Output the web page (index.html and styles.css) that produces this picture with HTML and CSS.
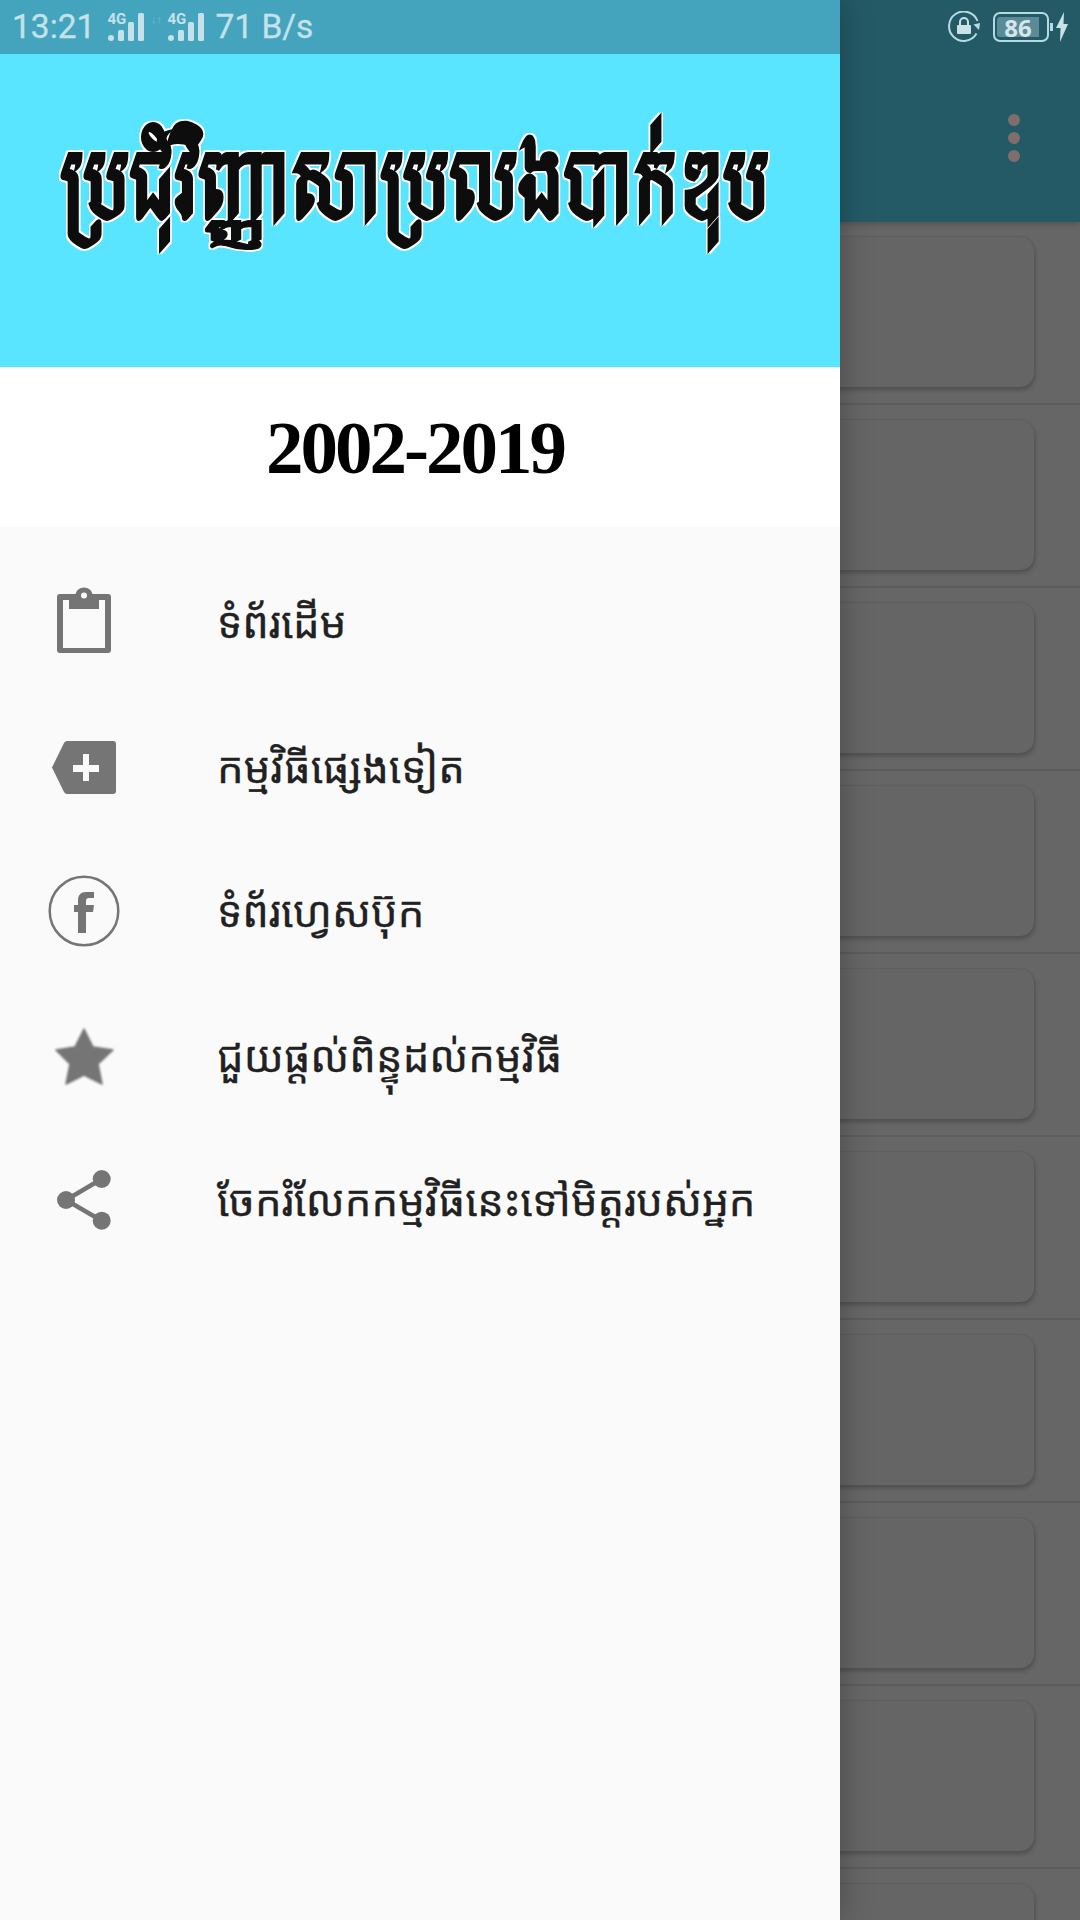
FILE: index.html
```html
<!DOCTYPE html>
<html lang="km">
<head>
<meta charset="utf-8">
<title>ប្រជុំវិញ្ញាសាប្រលងបាក់ឌុប</title>
<link rel="stylesheet" href="styles.css">
</head>
<body>
<div class="screen">
  <div class="main">
    <div class="topbar">
      <div class="sys-right">
        <svg class="i-lock" viewBox="0 0 32 32" width="32" height="32"><path d="M28.500 22.500A14.700 14.700 0 1 1 29.500 10" fill="none" stroke="#b5dbe2" stroke-width="2"/><path d="M25.500 13.500L32 12l-1 7z" fill="#b5dbe2"/><rect x="9" y="14" width="14" height="9" rx="1" fill="#c9e2e7"/><path d="M12 14v-3a4 4 0 0 1 8 0v3" fill="none" stroke="#c9e2e7" stroke-width="2"/></svg>
        <div class="battery"><span class="battery-fill">86</span></div>
        <span class="battery-tip"></span>
        <svg class="i-bolt" viewBox="0 0 12 30" width="12" height="30"><path d="M8 0L0 16h4.500L4 30 12 12H7.500z" fill="#c9e2e7"/></svg>
      </div>
      <div class="appbar">
        <div class="overflow"><span></span><span></span><span></span></div>
      </div>
    </div>
    <div class="list">
      <div class="row"><div class="card"></div></div>
      <div class="row"><div class="card"></div></div>
      <div class="row"><div class="card"></div></div>
      <div class="row"><div class="card"></div></div>
      <div class="row"><div class="card"></div></div>
      <div class="row"><div class="card"></div></div>
      <div class="row"><div class="card"></div></div>
      <div class="row"><div class="card"></div></div>
      <div class="row"><div class="card"></div></div>
      <div class="row"><div class="card"></div></div>
    </div>
  </div>

  <aside class="drawer">
    <div class="statusbar">
      <span class="clock">13:21</span>
      <div class="signal">
        <span class="net">4G</span>
        <svg viewBox="0 0 36 28" width="36" height="28"><circle cx="3" cy="25" r="3" fill="#c5e1e9"/><rect x="10" y="17" width="6" height="11" rx="1.500" fill="#c5e1e9"/><rect x="20" y="9" width="6" height="19" rx="1.500" fill="#c5e1e9"/><rect x="30" y="0" width="6" height="28" rx="1.500" fill="#c5e1e9"/></svg>
      </div>
      <span class="arrows">↓↑</span>
      <div class="signal">
        <span class="net">4G</span>
        <svg viewBox="0 0 36 28" width="36" height="28"><circle cx="3" cy="25" r="3" fill="#c5e1e9"/><rect x="10" y="17" width="6" height="11" rx="1.500" fill="#c5e1e9"/><rect x="20" y="9" width="6" height="19" rx="1.500" fill="#c5e1e9"/><rect x="30" y="0" width="6" height="28" rx="1.500" fill="#c5e1e9"/></svg>
      </div>
      <span class="speed">71 B/s</span>
    </div>
    <header class="banner">
      <h1 class="banner-title">ប្រជុំវិញ្ញាសាប្រលងបាក់ឌុប</h1>
    </header>
    <div class="years">2002-2019</div>
    <nav class="menu">
      <a class="item">
        <span class="ico">
          <svg viewBox="0 0 72 72" width="72" height="72"><path d="M12 8h15.500a8.800 8.800 0 0 1 17 0H60a3 3 0 0 1 3 3v53a3 3 0 0 1-3 3H12a3 3 0 0 1-3-3V11a3 3 0 0 1 3-3zM15 14v48h42V14h-6v9H21v-9z" fill="#757575" fill-rule="evenodd"/><circle cx="36" cy="9.500" r="3" fill="#fafafa"/></svg>
        </span>
        <span class="label">ទំព័រដើម</span>
      </a>
      <a class="item">
        <span class="ico">
          <svg viewBox="0 0 72 72" width="72" height="72"><path d="M19 10h46a3 3 0 0 1 3 3v47a3 3 0 0 1-3 3H19a4 4 0 0 1-3-2L4 36.500 16 12a4 4 0 0 1 3-2z" fill="#757575"/><path d="M35 23h6v11h10v7H41v9h-6v-9H25v-7h10z" fill="#fafafa"/></svg>
        </span>
        <span class="label">កម្មវិធីផ្សេងទៀត</span>
      </a>
      <a class="item">
        <span class="ico">
          <svg viewBox="0 0 72 72" width="72" height="72"><circle cx="36" cy="36" r="34.300" fill="none" stroke="#757575" stroke-width="2.500"/><path d="M30 58V37h-4v-7h4v-5c0-5 3-8 8-8h8v6h-5c-2 0-3 1-3 3v4h8l-1 7h-7v21z" fill="#757575"/></svg>
        </span>
        <span class="label">ទំព័រហ្វេសប៊ុក</span>
      </a>
      <a class="item">
        <span class="ico">
          <svg class="blurred" viewBox="0 0 72 72" width="72" height="72"><path d="M36 9l9 18 20 3-15 14 4 20-18-9-18 9 4-20L8 30l19-3z" fill="#757575" stroke="#757575" stroke-width="1.500" stroke-linejoin="round"/></svg>
        </span>
        <span class="label">ជួយផ្តល់ពិន្ទុដល់កម្មវិធី</span>
      </a>
      <a class="item">
        <span class="ico">
          <svg viewBox="0 0 72 72" width="72" height="72"><path d="M53.700 15L18 36l35.700 20.700" fill="none" stroke="#757575" stroke-width="4.500"/><circle cx="53.700" cy="15" r="9" fill="#757575"/><circle cx="18" cy="36" r="9" fill="#757575"/><circle cx="53.700" cy="56.700" r="9" fill="#757575"/></svg>
        </span>
        <span class="label">ចែករំលែកកម្មវិធីនេះទៅមិត្តរបស់អ្នក</span>
      </a>
    </nav>
  </aside>
</div>
</body>
</html>
```

FILE: styles.css
```css
* { box-sizing: border-box; }
html, body { margin: 0; padding: 0; }
body {
  width: 1080px;
  height: 1920px;
  overflow: hidden;
  font-family: "Noto Sans Khmer", sans-serif;
  background: #666;
}
.screen { position: relative; width: 1080px; height: 1920px; overflow: hidden; }

/* dimmed page underneath */
.main { display: flex; flex-direction: column; height: 100%; background: #666; }
.topbar { height: 222px; background: #245a66; flex: none; box-shadow: 0 2px 6px rgba(0,0,0,.2); position: relative; z-index: 1; }
.sys-right {
  height: 54px;
  display: flex;
  align-items: center;
  justify-content: flex-end;
  padding-right: 12px;
}
.i-lock { margin-right: 13px; }
.battery {
  width: 56px; height: 30px;
  border: 2px solid #b5dbe2;
  border-radius: 7px;
  padding: 3px 0 3px 2px;
}
.battery-fill {
  display: block;
  width: 42px; height: 20px;
  background: #5b8b96;
  border-radius: 3px 0 0 3px;
  color: #d6e6ea;
  font: 700 24px/21px "Noto Sans", sans-serif;
  text-align: center;
}
.battery-tip { width: 3px; height: 8px; background: #b5dbe2; margin: 0 3px 0 1px; }
.appbar { height: 168px; display: flex; justify-content: flex-end; padding: 60px 60px 0 0; }
.overflow { display: flex; flex-direction: column; gap: 6px; }
.overflow span { width: 12px; height: 12px; border-radius: 50%; background: #7f6e6e; }

.list { flex: 1; overflow: hidden; }
.row {
  height: 183px;
  padding: 15px 46px 16px 0;
  border-bottom: 2px solid #5c5c5c;
}
.card {
  height: 150px;
  background: #656565;
  border-radius: 0 14px 14px 0;
  box-shadow: 1px 3px 4px rgba(0,0,0,.22), 0 -1px 2px rgba(0,0,0,.06);
}

/* drawer */
.drawer {
  position: absolute;
  top: 0; left: 0; bottom: 0;
  width: 840px;
  display: flex;
  flex-direction: column;
  background: #fafafa;
  box-shadow: 0 0 30px rgba(0,0,0,.28);
  z-index: 2;
}
.statusbar {
  height: 54px;
  flex: none;
  background: #44a4bd;
  display: flex;
  align-items: center;
  padding-left: 12px;
  color: #c5e1e9;
  font: 400 33.500px/54px Roboto, sans-serif;
  -webkit-text-stroke: .3px #c5e1e9;
}
.clock { margin-right: 13px; }
.signal { position: relative; width: 36px; height: 28px; }
.signal svg { display: block; }
.net {
  position: absolute; left: -1px; top: -1px;
  font: 700 15px/14px Roboto, sans-serif;
  color: #c5e1e9;
  -webkit-text-stroke: 0;
}
.arrows { width: 24px; font-size: 11px; line-height: 11px; text-align: center; color: #74b8cc; margin: -16px 0 0 0; -webkit-text-stroke: 0; }
.speed { margin-left: 11px; }

.banner {
  height: 313px;
  flex: none;
  background: #59e4ff;
  display: flex;
  justify-content: center;
  padding: 73px 8px 0 0;
}
.banner-title {
  margin: 0;
  font-family: Bokor, "Noto Sans Khmer", serif;
  font-size: 78px;
  font-weight: 700;
  line-height: 130px;
  height: 130px;
  color: #0d0d0d;
  white-space: nowrap;
  transform: scaleY(1.13);
  -webkit-text-stroke: 1px #0d0d0d;
  text-shadow: 2px 0 0 #fff, -2px 0 0 #fff, 0 2px 0 #fff, 0 -2px 0 #fff, 2px 2px 0 #fff, -2px 2px 0 #fff, 2px -2px 0 #fff, -2px -2px 0 #fff;
}
.years {
  height: 160px;
  flex: none;
  background: #fff;
  color: #000;
  padding: 1px 10px 0 0;
  text-align: center;
  font: 700 75px/160px "Liberation Serif", serif;
  letter-spacing: -3px;
}
.menu { display: flex; flex-direction: column; padding-top: 23px; }
.item { display: flex; align-items: center; height: 144.500px; }
.ico { width: 72px; height: 72px; margin: 0 48px 0 48px; flex: none; }
.ico svg { display: block; }
.blurred { filter: blur(1px); }
.label {
  font-size: 42px;
  line-height: 60px;
  color: #212121;
  white-space: nowrap;
  margin-left: 49px;
  -webkit-text-stroke: .3px #212121;
}
```
